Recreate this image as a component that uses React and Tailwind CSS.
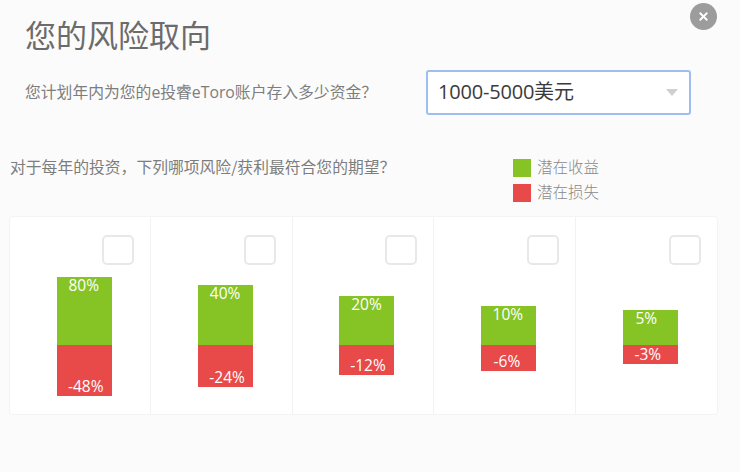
import React from 'react';
import { X } from 'lucide-react';

const options = [
  { gain: '80%', loss: '-48%', gainH: 'h-[68px]', lossH: 'h-[51px]', gainX: 'pr-[1px]', lossX: 'pl-[3px]' },
  { gain: '40%', loss: '-24%', gainH: 'h-[60px]', lossH: 'h-[42px]', gainX: 'pr-[1px]', lossX: 'pl-[3px]' },
  { gain: '20%', loss: '-12%', gainH: 'h-[49px]', lossH: 'h-[30px]', gainX: 'pr-[1px]', lossX: 'pl-[2px]' },
  { gain: '10%', loss: '-6%', gainH: 'h-[39px]', lossH: 'h-[26px]', gainX: 'pr-[1px]', lossX: 'pr-[3px]' },
  { gain: '5%', loss: '-3%', gainH: 'h-[35px]', lossH: 'h-[19px]', gainX: 'pr-[8px]', lossX: 'pr-[5px]' },
];

const App = () => {
  return (
    <div
      className="relative w-[740px] h-[472px] overflow-hidden bg-[#fbfbfb] text-[#6f6f6f]"
      style={{ fontFamily: '"Noto Sans CJK SC", "Open Sans", sans-serif' }}
    >
      {/* close */}
      <button className="absolute left-[690px] top-[3px] w-[27px] h-[27px] rounded-full bg-[#9c9c9c] flex items-center justify-center text-white">
        <X size={13} strokeWidth={3.5} />
      </button>

      <h1 className="pl-[25px] pt-[13px] h-[69px] text-[31px] leading-[42px] font-normal text-[#6b6b6b]">您的风险取向</h1>

      <div className="flex items-center h-[46px]">
        <p className="w-[426px] pl-[25px] text-[15.8px] leading-[24px] text-[#7d7d7d]" style={{ fontFamily: '"Open Sans", "Noto Sans CJK SC", sans-serif' }}>
          您计划年内为您的e投睿eToro账户存入多少资金？
        </p>
        <div className="w-[265px] h-[45px] pl-[10px] pr-[11px] flex items-center justify-between bg-white border-2 border-[#9dbdf3] rounded-[3px] text-[#3a3a3a]">
          <span className="text-[20px] tracking-[-0.2px]" style={{ fontFamily: '"Open Sans", "Noto Sans CJK SC", sans-serif' }}>1000-5000美元</span>
          <span className="w-0 h-0 border-x-[6px] border-x-transparent border-t-[7px] border-t-[#cfcfcf]" />
        </div>
      </div>

      <div className="flex mt-[44px] h-[58px]">
        <p className="w-[513px] pl-[10px] -mt-[2px] text-[15.8px] leading-[20px] text-[#7d7d7d]">对于每年的投资，下列哪项风险/获利最符合您的期望？</p>
        <div className="flex flex-col gap-[7px] text-[15.5px] text-[#8a8a8a] font-light">
          <div className="flex items-center gap-[6px] h-[18px]">
            <span className="w-[18px] h-[18px] bg-[#85c424]" />
            <span className="pb-[2px]">潜在收益</span>
          </div>
          <div className="flex items-center gap-[6px] h-[18px]">
            <span className="w-[18px] h-[18px] bg-[#e84a4a]" />
            <span className="pb-[2px]">潜在损失</span>
          </div>
        </div>
      </div>

      {/* options */}
      <div className="ml-[10px] w-[707px] h-[197px] bg-white rounded-[3px] ring-1 ring-[#f4f4f4] grid grid-cols-5" style={{ fontFamily: '"Open Sans", sans-serif' }}>
        {options.map((o) => (
          <div key={o.gain} className="border-r border-[#f2f2f2] last:border-r-0 pt-[18px]">
            <div className="flex justify-end pr-[16px]">
              <div className="w-[32px] h-[30px] rounded-[5px] border-2 border-[#e8e8e8] bg-white" />
            </div>
            <div className="flex flex-col items-center pl-[8px]">
              <div className="h-[80px] flex items-end">
                <div className={`${o.gainH} ${o.gainX} w-[55px] bg-[#85c424] text-white text-center text-[15.5px] leading-[17px]`}>{o.gain}</div>
              </div>
              <div className={`${o.lossH} ${o.lossX} w-[55px] pb-px bg-[#e84a4a] text-white text-center text-[15.5px] leading-[17px] flex items-end justify-center`}>{o.loss}</div>
            </div>
          </div>
        ))}
      </div>
    </div>
  );
};

export default App;
